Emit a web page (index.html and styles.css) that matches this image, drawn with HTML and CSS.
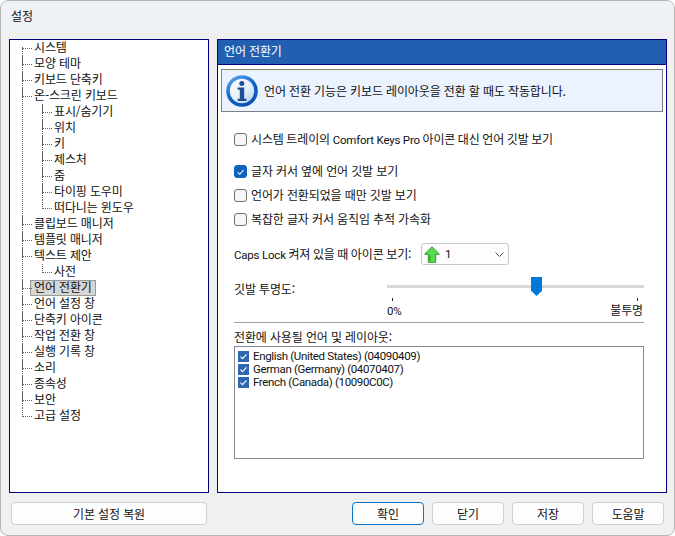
FILE: index.html
```html
<!DOCTYPE html>
<html lang="ko">
<head>
<meta charset="utf-8">
<title>설정</title>
<link rel="stylesheet" href="styles.css">
</head>
<body>
<div class="window">
  <header class="titlebar">설정</header>
  <main class="content">
    <nav class="tree">
      <ul class="level1">
        <li><span>시스템</span></li>
        <li><span>모양 테마</span></li>
        <li><span>키보드 단축키</span></li>
        <li><span>온-스크린 키보드</span>
          <ul class="level2">
            <li><span>표시/숨기기</span></li>
            <li><span>위치</span></li>
            <li><span>키</span></li>
            <li><span>제스처</span></li>
            <li><span>줌</span></li>
            <li><span>타이핑 도우미</span></li>
            <li><span>떠다니는 윈도우</span></li>
          </ul>
        </li>
        <li><span>클립보드 매니저</span></li>
        <li><span>템플릿 매니저</span></li>
        <li><span>텍스트 제안</span>
          <ul class="level2">
            <li><span>사전</span></li>
          </ul>
        </li>
        <li><span class="selected">언어 전환기</span></li>
        <li><span>언어 설정 창</span></li>
        <li><span>단축키 아이콘</span></li>
        <li><span>작업 전환 창</span></li>
        <li><span>실행 기록 창</span></li>
        <li><span>소리</span></li>
        <li><span>종속성</span></li>
        <li><span>보안</span></li>
        <li><span>고급 설정</span></li>
      </ul>
    </nav>
    <section class="panel">
      <h1 class="panel-title">언어 전환기</h1>
      <div class="info">
        <svg class="info-icon" viewBox="0 0 32 32" width="32" height="32" aria-hidden="true">
          <defs>
            <linearGradient id="ring" x1="0.2" y1="0" x2="0.8" y2="1">
              <stop offset="0" stop-color="#5aa6ee"/>
              <stop offset="0.5" stop-color="#0f62c4"/>
              <stop offset="1" stop-color="#0a4fb0"/>
            </linearGradient>
            <linearGradient id="disc" x1="0" y1="0" x2="1" y2="1">
              <stop offset="0" stop-color="#ffffff"/>
              <stop offset="0.6" stop-color="#e4eef8"/>
              <stop offset="1" stop-color="#a9c6e6"/>
            </linearGradient>
          </defs>
          <circle cx="16" cy="16" r="15.8" fill="url(#ring)"/>
          <circle cx="16" cy="16" r="12.2" fill="url(#disc)"/>
          <circle cx="15.8" cy="8.6" r="2.5" fill="#1b4f9c"/>
          <path d="M11.6 12.6h6.6v11.2h2.2v2.2h-8.8v-2.2h2.2v-9h-2.2z" fill="#1d4f98"/>
        </svg>
        <p>언어 전환 기능은 키보드 레이아웃을 전환 할 때도 작동합니다.</p>
      </div>
      <label class="check first"><i class="box"></i><span class="tight">시스템 트레이의 <span class="latin">Comfort Keys Pro</span> 아이콘 대신 언어 깃발 보기</span></label>
      <label class="check second"><i class="box on"><svg viewBox="0 0 12 12" width="12" height="12"><path d="M3 6.3l2.2 2.2L9.2 4" fill="none" stroke="#fff" stroke-width="1.1"/></svg></i><span>글자 커서 옆에 언어 깃발 보기</span></label>
      <label class="check"><i class="box"></i><span>언어가 전환되었을 때만 깃발 보기</span></label>
      <label class="check"><i class="box"></i><span>복잡한 글자 커서 움직임 추적 가속화</span></label>
      <div class="caps">
        <span class="caps-label tight"><span class="latin">Caps Lock</span> 켜져 있을 때 아이콘 보기:</span>
        <div class="combo">
          <svg viewBox="0 0 16 17" width="16" height="17" aria-hidden="true"><path d="M8 0.7L15.4 8.3h-3.7v8H4.3v-8H0.6z" fill="#55dc50" stroke="#2f9a2a" stroke-width="1"/><path d="M5.8 9v6" stroke="#2fae2a" stroke-width="1.4"/></svg>
          <span class="combo-value latin">1</span>
          <svg class="chev" viewBox="0 0 9 5" width="9" height="5" aria-hidden="true"><path d="M0.5 0.5L4.5 4.5l4-4" fill="none" stroke="#555" stroke-width="1"/></svg>
        </div>
      </div>
      <div class="opacity">
        <span class="opacity-label">깃발 투명도:</span>
        <div class="slider">
          <div class="track"></div>
          <div class="thumb"></div>
          <div class="ticks"><i></i><i></i></div>
          <div class="scale"><span class="latin">0%</span><span class="scale-end">불투명</span></div>
        </div>
      </div>
      <hr class="rule">
      <div class="list-label">전환에 사용될 언어 및 레이아웃:</div>
      <div class="list">
        <div class="row"><i class="mini"><svg viewBox="0 0 11 11" width="11" height="11"><path d="M2.5 5.7l2 2 4-4.4" fill="none" stroke="#fff" stroke-width="1.1"/></svg></i>English (United States) (04090409)</div>
        <div class="row"><i class="mini"><svg viewBox="0 0 11 11" width="11" height="11"><path d="M2.5 5.7l2 2 4-4.4" fill="none" stroke="#fff" stroke-width="1.1"/></svg></i>German (Germany) (04070407)</div>
        <div class="row"><i class="mini"><svg viewBox="0 0 11 11" width="11" height="11"><path d="M2.5 5.7l2 2 4-4.4" fill="none" stroke="#fff" stroke-width="1.1"/></svg></i>French (Canada) (10090C0C)</div>
      </div>
    </section>
  </main>
  <footer class="footer">
    <button class="btn reset">기본 설정 복원</button>
    <div class="actions">
      <button class="btn primary">확인</button>
      <button class="btn">닫기</button>
      <button class="btn">저장</button>
      <button class="btn">도움말</button>
    </div>
  </footer>
</div>
</body>
</html>
```
FILE: styles.css
```css
* { box-sizing: border-box; }
html, body { margin: 0; height: 100%; background: #fff; }
body {
  font-family: "Noto Sans CJK KR", sans-serif;
  font-size: 12px;
  line-height: 16px;
  letter-spacing: -0.13px;
  color: #111;
}
.latin {
  font-family: "Roboto", "Noto Sans CJK KR", sans-serif;
  font-size: 11.5px;
  letter-spacing: -0.2px;
  word-spacing: 0;
}
.tight { word-spacing: -0.6px; }
.window {
  width: 675px;
  height: 536px;
  display: flex;
  flex-direction: column;
  background: #f0f0f0;
  border: 1px solid #b4b4b4;
  border-radius: 8px;
  overflow: hidden;
}
.titlebar {
  height: 30px;
  flex: none;
  padding: 7px 0 0 10px;
  background: #eef2f6;
}
.content {
  display: flex;
  gap: 8px;
  height: 454px;
  margin: 8px 7px 0 8px;
  flex: none;
}
.tree {
  width: 200px;
  flex: none;
  background: #fff;
  border: 1px solid #000080;
  overflow: hidden;
}
.tree ul { list-style: none; margin: 0; padding: 0; }
.tree span {
  display: inline-block;
  height: 16px;
  padding: 0 3px;
  margin-left: -3px;
  white-space: nowrap;
  vertical-align: top;
  line-height: 13px;
}
.tree .selected {
  background: #d6d6d6;
  border: 1px solid #9a9a9a;
  line-height: 11px;
  padding: 0 2px 0 3px;
  margin-left: -4px;
  width: 66px;
}
.tree li { position: relative; }
.tree .level1 { padding-left: 12px; }
.level1 > li { padding-left: 12px; }
.level2 > li { padding-left: 12px; }
.tree .level2 { margin-left: 8px; }
.tree li::before {
  content: "";
  position: absolute;
  left: 0;
  top: 0;
  width: 9px;
  height: 8px;
  border-left: 1px dotted #666;
  border-bottom: 1px dotted #666;
}
.tree li:not(:last-child)::after {
  content: "";
  position: absolute;
  left: 0;
  top: 0;
  bottom: 0;
  border-left: 1px dotted #666;
}
.level1 > li:first-child::before { top: 7px; height: 1px; }
.level1 > li:first-child::after { top: 8px; }
.panel {
  width: 450px;
  flex: none;
  background: #fff;
  border: 1px solid #000080;
  display: flex;
  flex-direction: column;
  padding-bottom: 33px;
}
.panel-title {
  margin: 0;
  height: 25px;
  flex: none;
  padding-left: 6px;
  background: #235fb1;
  border-bottom: 1px solid #000080;
  color: #fff;
  font-size: 12px;
  font-weight: 400;
  line-height: 22px;
}
.info {
  display: flex;
  align-items: center;
  gap: 6px;
  height: 43px;
  flex: none;
  margin: 4px 3px 0;
  padding-left: 4px;
  background: #ebf3ff;
  border: 1px solid #808080;
}
.info p { margin: 0; white-space: nowrap; }
.info-icon { flex: none; }
.check {
  display: flex;
  align-items: center;
  gap: 4px;
  height: 16px;
  margin: 8px 0 0 16px;
  white-space: nowrap;
}
.check.first { margin-top: 19px; }
.check.second { margin-top: 16px; }
.box {
  width: 13px;
  height: 13px;
  flex: none;
  display: flex;
  background: #f6f6f6;
  border: 1px solid #6f6f6f;
  border-radius: 3px;
}
.box.on { background: #0d63bf; border-color: #0d63bf; }
.caps {
  display: flex;
  align-items: center;
  margin: 16px 0 0 16px;
  height: 22px;
  flex: none;
}
.caps-label { width: 187px; flex: none; white-space: nowrap; }
.combo {
  width: 88px;
  height: 22px;
  display: flex;
  align-items: center;
  padding-left: 2px;
  background: #fdfdfd;
  border: 1px solid #c8c8c8;
  border-radius: 3px;
}
.combo-value { margin-left: 5px; }
.chev { margin-left: auto; margin-right: 4px; }
.opacity {
  display: flex;
  margin: 12px 22px 0 16px;
  height: 41px;
  flex: none;
}
.opacity-label { width: 153px; flex: none; margin-top: 4px; }
.slider { position: relative; flex: 1; }
.track {
  height: 3px;
  margin-top: 8px;
  background: #d8d8d8;
}
.thumb {
  position: absolute;
  left: 144px;
  top: 0;
  width: 11px;
  height: 19px;
  background: #0078d7;
  clip-path: polygon(0 0, 100% 0, 100% 72%, 50% 100%, 0 72%);
}
.ticks {
  display: flex;
  justify-content: space-between;
  padding: 0 6px 0 5px;
  margin-top: 10px;
}
.ticks i { width: 1px; height: 3px; background: #222; }
.scale {
  display: flex;
  justify-content: space-between;
  line-height: 16px;
  margin-top: 2px;
}
.scale-end { line-height: 14px; margin-right: 1px; }
.rule {
  height: 1px;
  margin: 4px 22px 0 16px;
  border: 0;
  background: #a0a0a0;
  flex: none;
}
.list-label { margin: 6px 0 0 16px; height: 16px; flex: none; }
.list {
  margin: 1px 22px 0 16px;
  flex: 1;
  border: 1px solid #868a90;
  padding: 3px 0 0 3px;
  background: #fff;
}
.row {
  display: flex;
  align-items: center;
  gap: 4px;
  height: 13px;
  font-family: "Roboto", sans-serif;
  font-size: 11.5px;
  letter-spacing: -0.35px;
  line-height: 13px;
  white-space: nowrap;
}
.mini {
  width: 11px;
  height: 11px;
  flex: none;
  display: block;
  background: #2d67b0;
}
.mini svg { display: block; }
.footer {
  display: flex;
  justify-content: space-between;
  margin: 9px 10px 0 10px;
  flex: none;
}
.actions { display: flex; gap: 8px; }
.btn {
  width: 72px;
  height: 23px;
  padding: 0;
  font-family: inherit;
  font-size: 12px;
  letter-spacing: inherit;
  color: #111;
  background: #fdfdfd;
  border: 1px solid #cfcfcf;
  border-radius: 4px;
}
.btn.reset { width: 196px; }
.btn.primary { border-color: #0a74c8; }
```
